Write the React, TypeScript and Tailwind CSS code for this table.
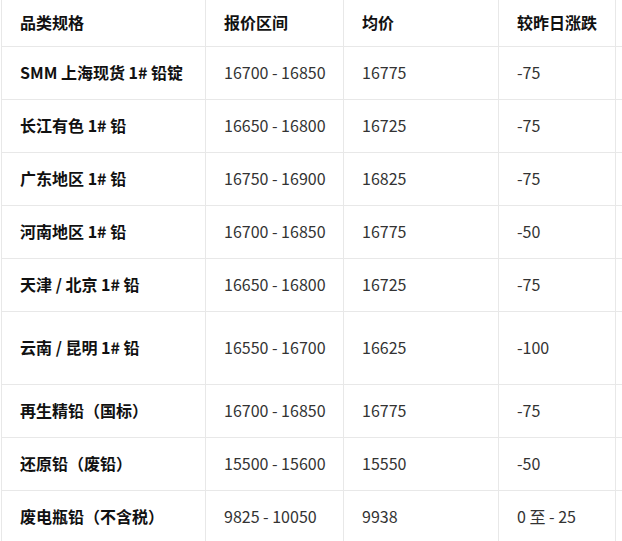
import React from "react";

type Row = { name: string; range: string; avg: string; chg: string; tall?: boolean };

const rows: Row[] = [
  { name: "SMM 上海现货 1# 铅锭", range: "16700 - 16850", avg: "16775", chg: "-75" },
  { name: "长江有色 1# 铅", range: "16650 - 16800", avg: "16725", chg: "-75" },
  { name: "广东地区 1# 铅", range: "16750 - 16900", avg: "16825", chg: "-75" },
  { name: "河南地区 1# 铅", range: "16700 - 16850", avg: "16775", chg: "-50" },
  { name: "天津 / 北京 1# 铅", range: "16650 - 16800", avg: "16725", chg: "-75" },
  { name: "云南 / 昆明 1# 铅", range: "16550 - 16700", avg: "16625", chg: "-100", tall: true },
  { name: "再生精铅（国标）", range: "16700 - 16850", avg: "16775", chg: "-75" },
  { name: "还原铅（废铅）", range: "15500 - 15600", avg: "15550", chg: "-50" },
  { name: "废电瓶铅（不含税）", range: "9825 - 10050", avg: "9938", chg: "0 至 - 25" },
];

const cell = "flex items-center border-r border-b border-[#e8e8e8] pl-[18px] pr-2 pb-[2px] whitespace-nowrap";

export default function App() {
  return (
    <div
      className="w-[622px] h-[541px] overflow-hidden bg-white"
      style={{ fontFamily: '"Noto Sans CJK SC", "Liberation Sans", sans-serif' }}
    >
      <div className="ml-px w-[760px] border-l border-[#e8e8e8] grid grid-cols-[204px_138px_155px_117px_140px] text-[16px] leading-[20px]">
        <div className={`${cell} h-[47px] font-bold text-[#111]`}>品类规格</div>
        <div className={`${cell} h-[47px] font-bold text-[#111]`}>报价区间</div>
        <div className={`${cell} h-[47px] font-bold text-[#111]`}>均价</div>
        <div className={`${cell} h-[47px] font-bold text-[#111]`}>较昨日涨跌</div>
        <div className={`${cell} h-[47px] font-bold text-[#111]`}></div>
        {rows.map((r) => {
          const h = r.tall ? "h-[73px]" : "h-[53px]";
          return (
            <React.Fragment key={r.name}>
              <div className={`${cell} ${h} font-bold text-[#111]`}>{r.name}</div>
              <div className={`${cell} ${h} text-[#333]`}>{r.range}</div>
              <div className={`${cell} ${h} text-[#333]`}>{r.avg}</div>
              <div className={`${cell} ${h} text-[#333]`}>{r.chg}</div>
              <div className={`${cell} ${h} text-[#333]`}></div>
            </React.Fragment>
          );
        })}
      </div>
    </div>
  );
}
